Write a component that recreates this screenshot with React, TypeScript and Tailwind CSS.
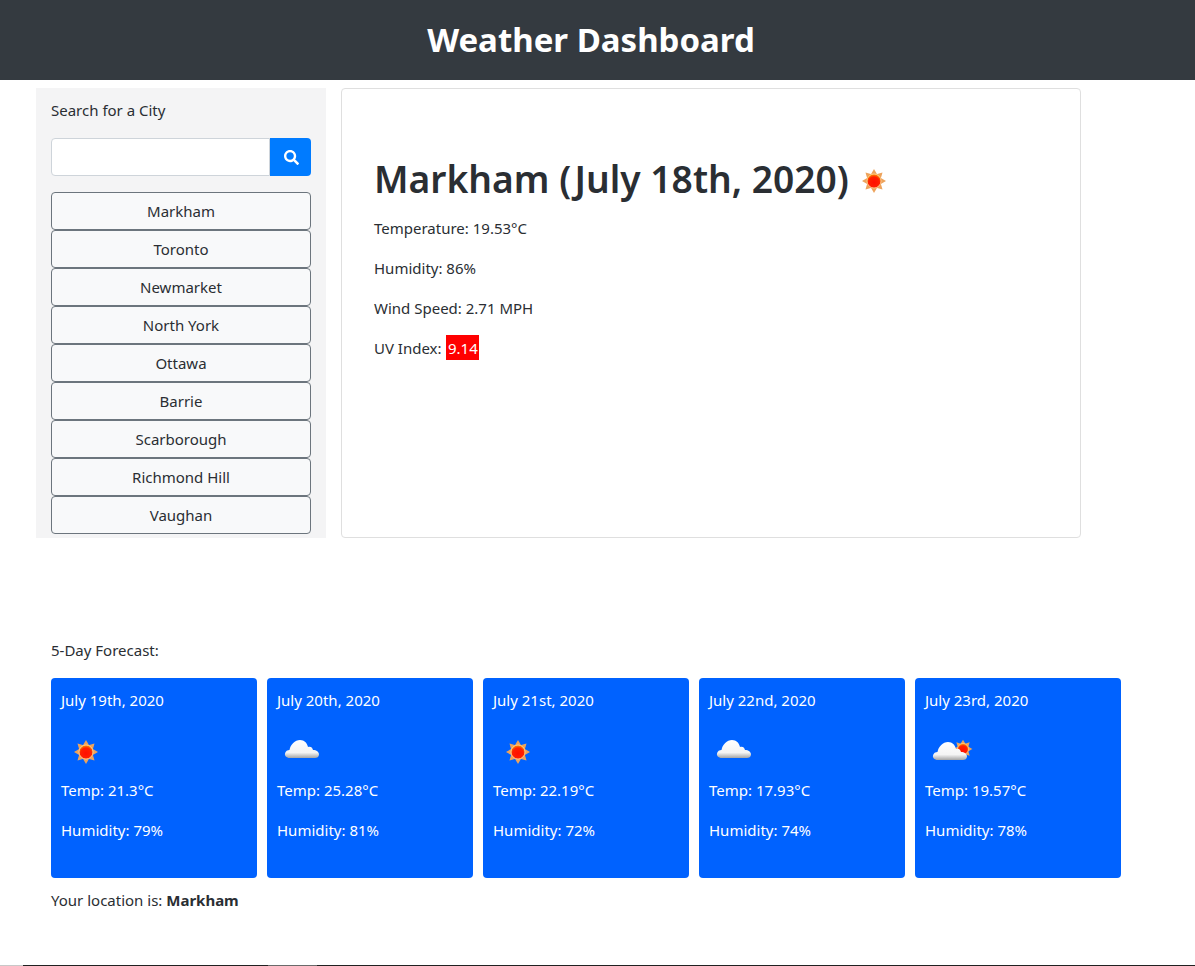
import { FaSearch } from "react-icons/fa";

const cities = ["Markham", "Toronto", "Newmarket", "North York", "Ottawa", "Barrie", "Scarborough", "Richmond Hill", "Vaughan"];

const forecast = [
    { date: "July 19th, 2020", icon: "sun", temp: "21.3", humidity: "79" },
    { date: "July 20th, 2020", icon: "cloud", temp: "25.28", humidity: "81" },
    { date: "July 21st, 2020", icon: "sun", temp: "22.19", humidity: "72" },
    { date: "July 22nd, 2020", icon: "cloud", temp: "17.93", humidity: "74" },
    { date: "July 23rd, 2020", icon: "partly", temp: "19.57", humidity: "78" },
];

const CLOUD_PATH =
    "M13 31 C9 31 7.5 28.5 8 26.5 C8.5 24 10.5 23 12.5 23 C13.5 17.5 18 13 23 13 C27.5 13 30 16 31 20 C33 19 35.5 20 36 23 C39.5 23 42 25 42 27.5 C42 30 40 31 38 31 Z";

const SunShape = ({ cx, cy, id, scale = 1 }: { cx: number; cy: number; id: string; scale?: number }) => (
    <g transform={`translate(${cx} ${cy}) scale(${scale})`}>
        <defs>
            <radialGradient id={id} cx="50%" cy="60%" r="60%">
                <stop offset="0%" stopColor="#ff0f00" />
                <stop offset="65%" stopColor="#ff2000" />
                <stop offset="100%" stopColor="#ffa000" />
            </radialGradient>
        </defs>
        <g fill="#eda35c">
            <polygon points="0,-12 3.5,-6 -3.5,-6" />
            <polygon points="0,12 3.5,6 -3.5,6" />
            <polygon points="-12,0 -6,-3.5 -6,3.5" />
            <polygon points="12,0 6,-3.5 6,3.5" />
            <polygon points="-8.5,-8.5 -1.5,-6.5 -6.5,-1.5" />
            <polygon points="8.5,-8.5 1.5,-6.5 6.5,-1.5" />
            <polygon points="-8.5,8.5 -1.5,6.5 -6.5,1.5" />
            <polygon points="8.5,8.5 1.5,6.5 6.5,1.5" />
        </g>
        <circle r="7" fill={`url(#${id})`} stroke="#ffe3b0" strokeWidth="0.7" />
    </g>
);

const Sun = ({ className }: { className: string }) => (
    <svg viewBox="0 0 50 50" className={className}>
        <SunShape cx={25} cy={25} id="sunCore" />
    </svg>
);

const CloudShape = ({ id }: { id: string }) => (
    <>
        <defs>
            <linearGradient id={id} x1="0" y1="0" x2="0" y2="1">
                <stop offset="0%" stopColor="#ffffff" />
                <stop offset="70%" stopColor="#f4f4f4" />
                <stop offset="100%" stopColor="#a5a5a5" />
            </linearGradient>
        </defs>
        <path d={CLOUD_PATH} fill={`url(#${id})`} />
    </>
);

const Cloud = ({ className }: { className: string }) => (
    <svg viewBox="0 0 50 50" className={className}>
        <CloudShape id="cloudFill" />
    </svg>
);

const Partly = ({ className }: { className: string }) => (
    <svg viewBox="0 0 50 50" className={className}>
        <SunShape cx={38} cy={22} id="sunCore2" scale={0.78} />
        <g transform="translate(0 2)">
            <CloudShape id="cloudFill2" />
        </g>
    </svg>
);

const WeatherIcon = ({ name, className }: { name: string; className: string }) => {
    if (name === "sun") return <Sun className={className} />;
    if (name === "cloud") return <Cloud className={className} />;
    return <Partly className={className} />;
};

const App = () => {
    return (
        <div className="min-h-[966px] bg-white text-[#2a2e33] font-['Noto_Sans',sans-serif] text-[15px] leading-[24px]">
            <header className="h-20 bg-[#343a40] flex items-center justify-center pr-[13px]">
                <h1 className="text-white text-[33px] font-bold leading-none -mt-px">Weather Dashboard</h1>
            </header>

            <div className="flex pt-2 pl-9">
                <aside className="w-[290px] h-[450px] bg-[#f4f4f5] px-[15px] pt-[10px]">
                    <p>Search for a City</p>
                    <div className="flex h-[38px] mt-4 mb-4">
                        <input className="flex-1 min-w-0 bg-white border border-[#ced4da] rounded-l" />
                        <button className="w-[41px] bg-[#007bff] text-white rounded-r flex items-center justify-center pl-0.5">
                            <FaSearch className="size-[15px]" />
                        </button>
                    </div>
                    {cities.map((city) => (
                        <button
                            key={city}
                            className="block w-full h-[38px] bg-[#f8f9fa] border border-[#6c757d] rounded text-center"
                        >
                            {city}
                        </button>
                    ))}
                </aside>

                <main className="w-[740px] h-[450px] ml-[15px] border border-[#dfdfdf] rounded px-8 pt-[60px]">
                    <div className="flex items-center h-[60px]">
                        <h2 className="text-[37.2px] font-semibold leading-[48px]">Markham (July 18th, 2020)</h2>
                        <Sun className="size-[50px] mt-[3px]" />
                    </div>
                    <p className="mt-[7px] mb-4">Temperature: 19.53°C</p>
                    <p className="mb-4">Humidity: 86%</p>
                    <p className="mb-4">Wind Speed: 2.71 MPH</p>
                    <p>
                        UV Index: <span className="bg-[#ff0000] text-white ml-px px-[1.5px] pt-[3px] pb-[2px]">9.14</span>
                    </p>
                </main>
            </div>

            <div className="pl-[51px] pt-[100px]">
                <p>5-Day Forecast:</p>
                <div className="flex gap-2.5 mt-4">
                    {forecast.map((day) => (
                        <div key={day.date} className="w-[206px] h-[200px] bg-[#0062ff] text-white rounded px-2.5 pt-2.5">
                            <p>{day.date}</p>
                            <WeatherIcon name={day.icon} className="size-[50px] mt-[15px]" />
                            <p className="mt-[1px] mb-4">Temp: {day.temp}°C</p>
                            <p>Humidity: {day.humidity}%</p>
                        </div>
                    ))}
                </div>
                <p className="mt-[10px]">
                    Your location is: <strong className="font-bold">Markham</strong>
                </p>
            </div>

            <div className="flex h-px mt-[53px]">
                <div className="w-[23px] bg-[#c8c8c8]" />
                <div className="w-[245px] bg-[#212121]" />
                <div className="w-[49px] bg-[#6a6a6a]" />
                <div className="flex-1 bg-[#212121]" />
            </div>
        </div>
    );
};

export default App;
